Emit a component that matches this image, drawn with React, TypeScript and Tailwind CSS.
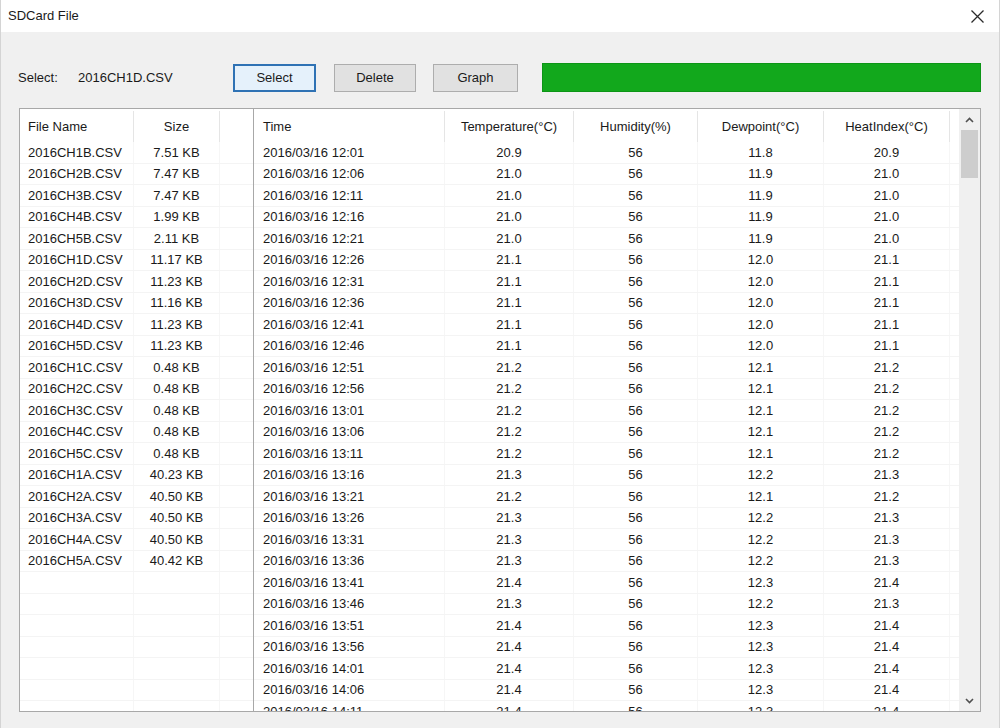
import React from "react";

const files: [string, string][] = [
  ["2016CH1B.CSV", "7.51 KB"],
  ["2016CH2B.CSV", "7.47 KB"],
  ["2016CH3B.CSV", "7.47 KB"],
  ["2016CH4B.CSV", "1.99 KB"],
  ["2016CH5B.CSV", "2.11 KB"],
  ["2016CH1D.CSV", "11.17 KB"],
  ["2016CH2D.CSV", "11.23 KB"],
  ["2016CH3D.CSV", "11.16 KB"],
  ["2016CH4D.CSV", "11.23 KB"],
  ["2016CH5D.CSV", "11.23 KB"],
  ["2016CH1C.CSV", "0.48 KB"],
  ["2016CH2C.CSV", "0.48 KB"],
  ["2016CH3C.CSV", "0.48 KB"],
  ["2016CH4C.CSV", "0.48 KB"],
  ["2016CH5C.CSV", "0.48 KB"],
  ["2016CH1A.CSV", "40.23 KB"],
  ["2016CH2A.CSV", "40.50 KB"],
  ["2016CH3A.CSV", "40.50 KB"],
  ["2016CH4A.CSV", "40.50 KB"],
  ["2016CH5A.CSV", "40.42 KB"],
];

// time, temp, humidity, dewpoint, heat index
const readings: [string, string, string, string, string][] = [
  ["12:01", "20.9", "56", "11.8", "20.9"],
  ["12:06", "21.0", "56", "11.9", "21.0"],
  ["12:11", "21.0", "56", "11.9", "21.0"],
  ["12:16", "21.0", "56", "11.9", "21.0"],
  ["12:21", "21.0", "56", "11.9", "21.0"],
  ["12:26", "21.1", "56", "12.0", "21.1"],
  ["12:31", "21.1", "56", "12.0", "21.1"],
  ["12:36", "21.1", "56", "12.0", "21.1"],
  ["12:41", "21.1", "56", "12.0", "21.1"],
  ["12:46", "21.1", "56", "12.0", "21.1"],
  ["12:51", "21.2", "56", "12.1", "21.2"],
  ["12:56", "21.2", "56", "12.1", "21.2"],
  ["13:01", "21.2", "56", "12.1", "21.2"],
  ["13:06", "21.2", "56", "12.1", "21.2"],
  ["13:11", "21.2", "56", "12.1", "21.2"],
  ["13:16", "21.3", "56", "12.2", "21.3"],
  ["13:21", "21.2", "56", "12.1", "21.2"],
  ["13:26", "21.3", "56", "12.2", "21.3"],
  ["13:31", "21.3", "56", "12.2", "21.3"],
  ["13:36", "21.3", "56", "12.2", "21.3"],
  ["13:41", "21.4", "56", "12.3", "21.4"],
  ["13:46", "21.3", "56", "12.2", "21.3"],
  ["13:51", "21.4", "56", "12.3", "21.4"],
  ["13:56", "21.4", "56", "12.3", "21.4"],
  ["14:01", "21.4", "56", "12.3", "21.4"],
  ["14:06", "21.4", "56", "12.3", "21.4"],
  ["14:11", "21.4", "56", "12.3", "21.4"],
];

const Chevron = ({ up }: { up?: boolean }) => (
  <svg width="9" height="6" viewBox="0 0 9 6">
    <path
      d={up ? "M1 5 L4.5 1.5 L8 5" : "M1 1 L4.5 4.5 L8 1"}
      fill="none"
      stroke="#505050"
      strokeWidth="1.6"
    />
  </svg>
);

export default function App() {
  const emptyRows = Array.from({ length: 27 - files.length });

  return (
    <div className="w-[1000px] h-[728px] bg-[#f0f0f0] border-x border-[#d4d4d4] flex flex-col overflow-hidden text-[13px] text-[#1a1a1a] font-['Liberation_Sans',Arial,sans-serif]">
      {/* Title bar */}
      <div className="h-[32px] bg-white flex items-center justify-between pl-[7px] pr-[14px] shrink-0">
        <span>SDCard File</span>
        <svg width="15" height="15" viewBox="0 0 15 15">
          <path d="M1.5 1.5 L13.5 13.5 M13.5 1.5 L1.5 13.5" stroke="#2a2a2a" strokeWidth="1.3" />
        </svg>
      </div>

      {/* Toolbar */}
      <div className="flex items-center pl-[17px] pt-[31px] pb-[16px] shrink-0">
        <span className="w-[60px]">Select:</span>
        <span className="w-[155px]">2016CH1D.CSV</span>
        <button className="w-[83px] h-[28px] border-2 border-[#2f72b4] bg-[#e5f1fb] flex items-center justify-center">
          Select
        </button>
        <button className="ml-[18px] w-[82px] h-[28px] border border-[#adadad] bg-[#e1e1e1] flex items-center justify-center">
          Delete
        </button>
        <button className="ml-[17px] w-[85px] h-[28px] border border-[#adadad] bg-[#e1e1e1] flex items-center justify-center">
          Graph
        </button>
        <div className="ml-[24px] w-[439px] h-[29px] bg-[#12a81c] border border-[#0c9516]" />
      </div>

      {/* Panels */}
      <div className="flex ml-[18px] mr-[18px] h-[604px]">
        {/* File list */}
        <div className="w-[235px] border border-[#a8a8a8] bg-white overflow-hidden flex flex-col">
          <div className="h-[33px] flex shrink-0 pt-[2px]">
            <div className="w-[114px] pl-[8px] flex items-center border-r border-[#e5e5e5]">File Name</div>
            <div className="w-[86px] flex items-center justify-center border-r border-[#e5e5e5]">Size</div>
            <div className="flex-1" />
          </div>
          {files.map(([name, size]) => (
            <div key={name} className="h-[21.52px] flex shrink-0 border-b border-[#f4f4f4]">
              <div className="w-[114px] pl-[8px] flex items-center border-r border-[#f6f6f6]">{name}</div>
              <div className="w-[86px] flex items-center justify-center border-r border-[#f6f6f6]">{size}</div>
              <div className="flex-1" />
            </div>
          ))}
          {emptyRows.map((_, i) => (
            <div key={i} className="h-[21.52px] flex shrink-0 border-b border-[#f4f4f4]">
              <div className="w-[114px] border-r border-[#f6f6f6]" />
              <div className="w-[86px] border-r border-[#f6f6f6]" />
            </div>
          ))}
        </div>

        {/* Readings grid */}
        <div className="flex-1 border-y border-r border-[#a8a8a8] bg-white flex overflow-hidden">
          <div className="flex-1 flex flex-col overflow-hidden">
            <div className="h-[33px] flex shrink-0 pt-[2px]">
              <div className="w-[191px] pl-[9px] flex items-center border-r border-[#e5e5e5]">Time</div>
              <div className="w-[129px] flex items-center justify-center border-r border-[#e5e5e5]">Temperature(°C)</div>
              <div className="w-[124px] flex items-center justify-center border-r border-[#e5e5e5]">Humidity(%)</div>
              <div className="w-[126px] flex items-center justify-center border-r border-[#e5e5e5]">Dewpoint(°C)</div>
              <div className="w-[126px] flex items-center justify-center border-r border-[#e5e5e5]">HeatIndex(°C)</div>
              <div className="flex-1" />
            </div>
            {readings.map(([time, temp, hum, dew, heat]) => (
              <div key={time} className="h-[21.52px] flex shrink-0 border-b border-[#f4f4f4]">
                <div className="w-[191px] pl-[9px] flex items-center border-r border-[#f6f6f6]">2016/03/16 {time}</div>
                <div className="w-[129px] flex items-center justify-center border-r border-[#f6f6f6]">{temp}</div>
                <div className="w-[124px] flex items-center justify-center border-r border-[#f6f6f6]">{hum}</div>
                <div className="w-[126px] flex items-center justify-center border-r border-[#f6f6f6]">{dew}</div>
                <div className="w-[126px] flex items-center justify-center border-r border-[#f6f6f6]">{heat}</div>
                <div className="flex-1" />
              </div>
            ))}
          </div>

          {/* Scrollbar */}
          <div className="w-[21px] bg-[#f0f0f0] flex flex-col items-center shrink-0">
            <div className="h-[21px] w-full flex items-center justify-center">
              <Chevron up />
            </div>
            <div className="w-[17px] h-[48px] bg-[#cdcdcd]" />
            <div className="flex-1" />
            <div className="h-[21px] w-full flex items-center justify-center">
              <Chevron />
            </div>
          </div>
        </div>
      </div>
    </div>
  );
}
